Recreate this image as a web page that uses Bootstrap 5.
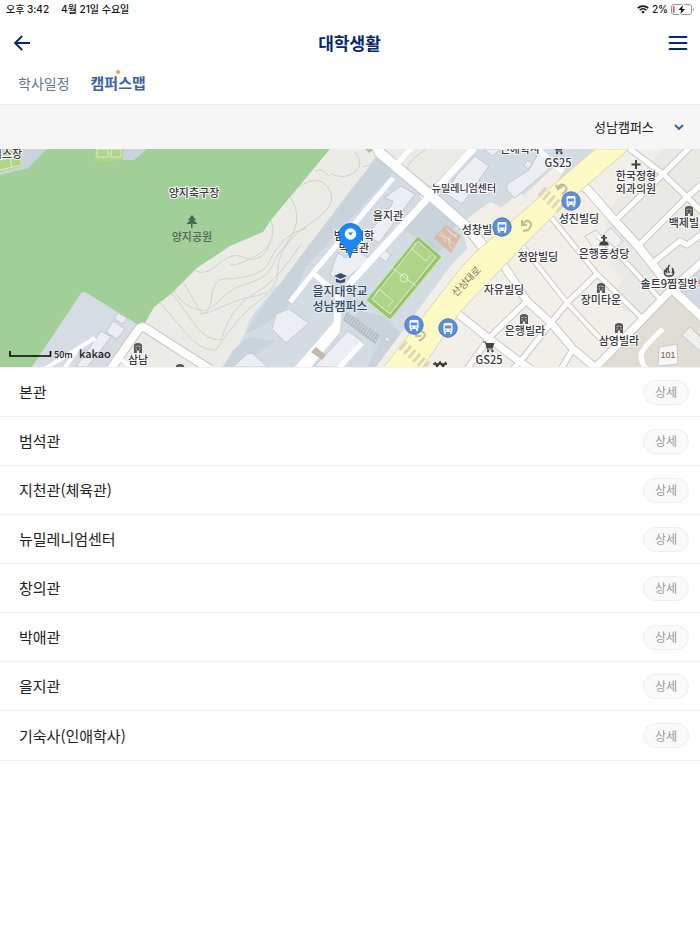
<!DOCTYPE html>
<html lang="ko">
<head>
<meta charset="utf-8">
<meta name="viewport" content="width=device-width, initial-scale=1">
<title>대학생활 - 캠퍼스맵</title>
<link rel="stylesheet" href="https://cdn.jsdelivr.net/npm/bootstrap@5.3.0/dist/css/bootstrap.min.css">
<style>
  :root { --navy: #062a6b; --blue: #3c5fa3; --line: #f1f1f1; }
  body { font-family: Inter, "Noto Sans CJK KR", sans-serif; color: #222; background: #fff; }
  svg { display: block; }
  .status-bar { height: 18px; font-size: 10px; line-height: 18px; font-weight: 500; color: #111; padding: 0 5px 0 6px; }
  .status-left { gap: 12px; }
  .status-right { gap: 3px; }
  .app-bar { height: 50px; padding: 0 12px 0 14px; color: var(--navy); font-family: "Noto Sans CJK KR", sans-serif; }
  .app-bar h1 { font-size: 17px; line-height: 24px; font-weight: 700; }
  .app-bar .btn { color: inherit; line-height: 1; }
  .page-tabs { height: 37px; padding: 4px 18px 0; gap: 21px; border-bottom: 1px solid #ebebeb; font-family: "Noto Sans CJK KR", sans-serif; }
  .page-tabs .nav-link { padding: 0; font-size: 14px; line-height: 22px; color: #5f7391; }
  .page-tabs .nav-link.active { color: var(--blue); font-size: 15px; font-weight: 700; }
  .tab-dot { width: 4px; height: 4px; background: #fb9a4b; top: -2px; }
  .campus-bar { height: 44px; background: #f6f6f6; padding-right: 14px; }
  .campus-bar .form-select {
    width: auto; border: 0; padding: 0 32px 0 0; font: 13px/22px "Noto Sans CJK KR", sans-serif; color: #222; background-color: transparent;
    background-image: url("data:image/svg+xml,%3Csvg xmlns='http://www.w3.org/2000/svg' viewBox='0 0 12 8'%3E%3Cpath d='M2 2l4 4 4-4' fill='none' stroke='%23315a9e' stroke-width='1.8'/%3E%3C/svg%3E");
    background-size: 12px 8px; background-position: right 1px center;
  }
  .campus-map { border-bottom: 1px solid #f3f3f3; font-family: "Noto Sans CJK KR", sans-serif; }
  .place-list { border-bottom: 1px solid var(--line); }
  .place-list .list-group-item { min-height: 49px; padding: 0 11px 0 19px; border-color: var(--line); color: #222; font: 15px/22px "Noto Sans CJK KR", sans-serif; }
  .place-list .btn { width: 46px; height: 25px; padding: 0; font-size: 12px; line-height: 22px; color: #999; background: #fafafa; border: 1px solid #eee; }
  .label { font-size: 11px; font-weight: 500; fill: #36363c; text-anchor: middle; paint-order: stroke; stroke: #fff; stroke-width: 2px; stroke-linejoin: round; }
  .contour { fill: none; stroke: #d0d1cc; }
  .building { fill: #ebeff3; stroke: #c3c9d0; stroke-width: 1; }
</style>
<script src="https://cdn.jsdelivr.net/npm/bootstrap@5.3.0/dist/js/bootstrap.bundle.min.js"></script>
</head>
<body>
<div class="status-bar d-flex justify-content-between">
  <div class="status-left d-flex"><span>오후 3:42</span><span>4월 21일 수요일</span></div>
  <div class="status-right d-flex align-items-center">
    <svg width="12" height="9" viewBox="0 0 12 9" aria-label="Wi-Fi"><path d="M.8 3.200a7.600 7.600 0 0 1 10.400 0M2.700 5.200a4.800 4.800 0 0 1 6.600 0" fill="none" stroke="#111" stroke-width="1.700"/><path d="M4.200 6.800a2.800 2.800 0 0 1 3.600 0L6 8.800z" fill="#111"/></svg>
    <span>2%</span>
    <svg width="24" height="11" viewBox="0 0 24 11" aria-label="배터리"><rect x=".5" y=".5" width="20" height="10" rx="2.500" fill="#fff" stroke="#999"/><path d="M22 3.800a2 2 0 0 1 0 3.400z" fill="#999"/><path d="M12 1L7.500 6h2.700L9.400 10 14 5h-2.800z" fill="#111" stroke="#fff" stroke-width="2" paint-order="stroke"/><path d="M2 2.200h1.500v6.600H2z" fill="#f2453d"/></svg>
  </div>
</div>

<header class="app-bar d-flex align-items-center justify-content-between">
  <button class="btn p-0 border-0" type="button" aria-label="뒤로"><svg width="17" height="16" viewBox="0 0 17 16"><path d="M16 8H1.500M8.200 1L1.200 8l7 7" fill="none" stroke="currentColor" stroke-width="1.900"/></svg></button>
  <h1 class="m-0">대학생활</h1>
  <button class="btn p-0 border-0" type="button" aria-label="메뉴"><svg width="20" height="16" viewBox="0 0 20 16"><path d="M1.500 2h17M1.500 8h17M1.500 14h17" stroke="currentColor" stroke-width="1.800" stroke-linecap="round"/></svg></button>
</header>

<nav class="page-tabs nav align-items-start">
  <a class="nav-link" href="#schedule">학사일정</a>
  <a class="nav-link active position-relative" href="#map" aria-current="page">캠퍼스맵<span class="tab-dot position-absolute start-50 translate-middle-x rounded-circle"></span></a>
</nav>

<main>
  <div class="campus-bar d-flex align-items-center justify-content-end">
    <label class="visually-hidden" for="campus">캠퍼스 선택</label>
    <select class="form-select" id="campus"><option>성남캠퍼스</option></select>
  </div>

  <div class="campus-map" id="map">
  <svg class="w-100 h-auto" viewBox="0 149 700 218" role="img" aria-label="성남캠퍼스 지도">
    <defs>
      <g id="tower"><path d="M-4 5V-2.500Q-4-5 0-5t4 2.500V5H1.200V2.500h-2.400V5z" fill="#555"/><path d="M-2.500-1.500h1.300m2.400 0h1.300M-2.500 1h1.300m2.400 0h1.300M-.5-2h1" stroke="#ddd" stroke-width="1.200"/></g>
      <g id="cart"><path d="M-6-5h2.500l2 7H4" fill="none" stroke="#444" stroke-width="1.200"/><path d="M-3.500-4H5.500L3.800 1h-6z" fill="#444"/><circle cx="-1" cy="4" r="1.200" fill="#444"/><circle cx="3.400" cy="4" r="1.200" fill="#444"/></g>
      <g id="bus"><circle r="9.200" fill="#5b8fdd" stroke="#4b79c4"/><rect x="-4.500" y="-5" width="9" height="9" rx="1.500" fill="#fff"/><path d="M-3.200-2.500h6.400v3h-6.400z" fill="#5b8fdd"/><path d="M-3 4v1.800M3 4v1.800" stroke="#fff" stroke-width="1.800"/><path d="M-3 2.200h1.500m3 0H3" stroke="#5b8fdd"/></g>
      <g id="streets">
        <path stroke-width="8" d="M578 182l10 8 27 31 23 25 34 43 32 30"/>
        <path stroke-width="5" d="M626 146l37 28 24 23 16 16M615 221l48-47 28-28M638 246l49-49 16-14M655 261l25-20 7 4 16-12"/>
        <path stroke-width="4" d="M550 216l47 58 46 45M598 236l22 20 40 43M520 243l48 61 39 42"/>
        <path stroke-width="7" d="M594 369l46-47 32-33 30-27M453 310l34 27 33 25 12 8M500 260l10 15 17 26 25 23 21 25 24 20"/>
        <path stroke-width="5" d="M597 274l-29 28-18 22-30 38-8 8M527 301l-37 36-23 32M573 349l-12 20"/>
        <path stroke-width="10" d="M376 144l4 9 50 42 40 35 16 20"/>
        <path stroke-width="5" d="M413 146l-15 17"/>
        <path stroke-width="7" d="M474 148l-46 50-76 83-14 20-1 23-42 48M337 322l-1 9-31 38"/>
        <path stroke-width="5" d="M393 178l-80 95-23 29M313 273l15 13 11 14M362 343l-24 26M535 146l28 26"/>
        <path stroke-width="8" d="M110 370l28-40q4-5 9-1l64 41"/>
        <path stroke-width="4" d="M95 338l-52 32M77 350l-13 19M117 356l15 12"/>
      </g>
    </defs>
    <path fill="#ebece6" d="M0 149h700v218H0z"/>
    <path fill="#f2efe8" d="M375 367l100-139 80-79h145v218z"/>
    <path fill="#e9eae4" d="M612 205l51-56h37v130l-28 12-29 27-35-15 14-23-22-30z"/>
    <path fill="#e0ddd4" d="M597 369l75-75 28 25v50z"/>
    <path fill="#d3dae3" d="M700 264l-22 23 22 27z"/>
    <path fill="#e99b96" d="M700 279l-4 3 4 3z"/>

    <g class="contour">
      <path d="M315 171q7-4 14 5M299 187q20-14 30 2t-18 34q-33 21-33 47 0 22-22 26c-24 3-44 18-56 18M271 220q7 20-10 33-27 15-31 11M290 197c20 30-10 50-16 65s-15 18-34 24c-24 10-25 31-47 22-19-8-25-28-28-44M355 152q10 12 0 20t-24 2M378 152q-2 13-15 15"/>
      <path d="M195 271q10 4 20-4 14-14 25-11 22 11 31-15M183 283c12 13 19 48 28 19q2-24 13-23 36-1 44-15 12-29 38-36M171 293c20 22 27 47 50 47q10-34 33-46t47-50M160 303c20 20 33 48 56 47q20-30 34-42l28-22M172 340l30 22"/>
    </g>
    <path fill="#a0cf97" d="M0 149h330l-59 71-8 12-33 14-33 22-25 25-18 14-10 18-5 3-54-35h-3L32 367H0zM365 149h9l-5 4z"/>
    <path fill="#cbd4dd" d="M0 149h47l-19 19-28 7zM123 149h24l-13 11h-11z"/>
    <path fill="#b0d488" d="M0 152l20-3 3 17-23 6zM95 149h28v11l-29 3z"/>
    <path d="M0 160l20-4 2 9-22 5M10 158l2 9M97 149h11v8H97zm14 0h10v8h-10z" fill="none" stroke="#dfeec0"/>
    <path fill="#d5dce3" d="M82 292h3l55 34-28 41H32z"/>
    <g class="building"><path d="M118 313l9 5-4 6-9-5zM113 321l12 8-8 10-11-7zM101 331l10 6-24 30H76zM223 367l16-15 14 15z"/></g>

    <path fill="#d3dbe3" d="M376 155l9-6h215l-52 48-52 20-21 21-78 102-19 27H223l20-29 7-19 15-19 70-75z"/>
    <path fill="#c8d3dc" d="M380 153l-23 29-60 79-33 44-18 28 16-6 28-23 16-37 86-93 8-12zM233 350l17-13 25 4-16 12-22 14h-14zM353 298l12 6-14 16 30 18-14 29h14l22-31-19-20-22-4zM430 198l28 22-12 27-9 5-38-26z"/>
    <path fill="#f2efe8" d="M376 367l76-103 47-44 24-24 28-26 20-12-40 70-110 139z"/>
    <path fill="#f2efe8" d="M460 224l30-22 12 5 18-15 6 7-40 38-18 13z"/>
    <path fill="#ebebe5" d="M385 149h84l-38 38-33-25z"/>
    <path class="contour" d="M406 171q3-12 21-22"/>
    <g class="building">
      <path d="M401 186l14 8-36 49-12-8 24-29 2-5-9-3z"/><path d="M338 253l8 5 8-10 16 11-30 25-10-10 5-14z"/><path d="M289 309l20 14-23 20-14-14 4-15zM348 331l14 10-24 26h-24zM252 353l16 14h-35l14-13z"/>
      <path d="M385 250l6 5-5 7-7-5zM421 193l5 4-4 3-4-4zM387 336l4 6-7-2z"/>
      <path d="M475 156l14 10-27 38-16-10 10-18zM507 184l22-14 10-18 16 12-40 34-8-8zM528 160l4 4-4 5-4-4zM484 149h18l-10 7z"/>
      <path fill="#f0f0ed" d="M585 236l11-6 6 6 9-8 12 13-11 11-6-5-8 9zM682 335l8-8 14 14v14z"/>
      <path fill="#f7f6f2" d="M659 347l18-3 1 20-20 2z"/>
    </g>

    <path fill="#aed587" stroke="#d6e8bf" d="M418 236l24 21-52 63-24-20z"/>
    <path fill="none" stroke="#97c56f" stroke-width="3" d="M418 239l21 18-49 60-21-17z"/>
    <g fill="none" stroke="#dfefd0"><path d="M418 241l18 16-46 57-18-15zM391 267l25 19M416 243l-4 6 14 12 5-6M375 295l4-6 14 12-5 6"/><circle cx="404" cy="278" r="4"/></g>
    <path fill="#d8b9a8" d="M446 225l15 11-10 17-17-15z"/><path d="M440 232l15 13M446 228l11 10M452 249q-5-7-2-13M439 235q7 1 6 7M457 235q-7 1-8-5" fill="none" stroke="#f0e2d8"/>

    <g fill="none" stroke="#c8c8c6" stroke-linejoin="round">
      <path stroke-width="7" d="M626 146l37 28 24 23 16 16M615 221l48-47 28-28M638 246l49-49 16-14M655 261l25-20 7 4 16-12M597 274l-29 28-18 22-30 38-8 8M527 301l-37 36-23 32M573 349l-12 20"/>
      <path stroke-width="10" d="M578 182l10 8 27 31 23 25 34 43 32 30"/>
      <path stroke-width="6" d="M550 216l47 58 46 45M598 236l22 20 40 43M520 243l48 61 39 42"/>
      <path stroke-width="9" d="M594 369l46-47 32-33 30-27M453 310l34 27 33 25 12 8M500 260l10 15 17 26 25 23 21 25 24 20"/>
      <path stroke-width="12" d="M376 144l4 9 50 42 40 35 16 20"/>
      <path stroke-width="10" d="M110 370l28-40q4-5 9-1l64 41"/>
    </g>
    <g fill="none" stroke="#fff" stroke-linejoin="round"><use href="#streets"/></g>
    <path d="M663 329q-18 16-22 25 0 10 6 15" fill="none" stroke="#fff" stroke-width="5"/>
    <path fill="#c4b9ad" d="M316 347l10 8-4 5-11-8z"/>
    <path fill="#b5bdc4" d="M347 312l33 24-5 8-32-24z"/><path d="M347 317l30 22" stroke="#d3d9de" stroke-width="7" stroke-dasharray="1 2"/>

    <path fill="#fefac4" stroke="#d9d6b8" d="M383 368l77-99 16-17 119-103h34l-42 36-35 32-29 29-63 66-38 56z"/>
    <path d="M541 191l22 19M402 345l25 22" stroke="#ddd8b3" stroke-width="11" stroke-dasharray="3 3"/>
    <g fill="none" stroke="#c1bca0" stroke-width="2"><path d="M523 231l5-1q5-5 2-8-4-3-7 2m-1-4v5h5"/><path d="M562 194q8-5 2-9-4-2-6 3m-2-3l2 4 5-3M419 341q8-4 5-8-4-4-7 1m-1-3v5h5"/></g>

    <use href="#bus" x="571" y="201"/><use href="#bus" x="414" y="325"/><use href="#bus" x="448" y="328"/>
    <use href="#tower" x="138" y="348"/><use href="#tower" x="180" y="369"/><use href="#tower" x="689" y="211"/><use href="#tower" x="601" y="288"/><use href="#tower" x="524" y="319"/><use href="#tower" x="619" y="328"/>
    <use href="#cart" x="558" y="149"/><use href="#cart" x="489" y="347"/>
    <path d="M636 160v9M631.500 164.500h9" stroke="#444" stroke-width="2"/>
    <path fill="#444" d="M603 235h2v2h2v1.500h-2v2.500l3 1.500 1 3H599l1-3 3-1.500v-2.500h-2V237h2z"/>
    <path d="M665 270q-2 5 2 6h4q4-1 2-6M667 273q-2-3 0-5M669.500 273q-3-4 0-8M672 273q2-3 0-5" fill="none" stroke="#444" stroke-width="1.500"/>
    <path fill="#4a6650" d="M192 215l4 5h-2l3.500 4h-5v4h-1.500v-4h-4.500l3.500-4h-2z"/>
    <path fill="#34506f" d="M340.500 273l6.500 3-6.500 3-6.500-3zM336 278.500l4.500 2 4.500-2v3.500q-4.500 2-9 0z"/>
    <path d="M435 362l2 5 3-5 3 5 3-5M433 364h14" fill="none" stroke="#333" stroke-width="1.500"/>

    <g class="label">
      <text x="7" y="158">니스장</text>
      <text x="194" y="197">양지축구장</text>
      <text x="192" y="241" fill="#53655a" stroke="none">양지공원</text>
      <text x="388" y="220">을지관</text>
      <text x="464" y="192" font-size="10">뉴밀레니엄센터</text>
      <text x="520" y="153">인애학사</text>
      <text x="558" y="167">GS25</text>
      <text x="636" y="180">한국정형</text><text x="636" y="193">외과의원</text>
      <text x="579" y="223">성진빌딩</text><text x="482" y="234">성창빌딩</text>
      <text x="538" y="261">정암빌딩</text><text x="604" y="258">은행동성당</text>
      <text x="504" y="294">자유빌딩</text><text x="601" y="304">장미타운</text>
      <text x="689" y="227">백제빌딩</text><text x="669" y="288">솔트9찜질방</text>
      <text x="525" y="335">은행빌라</text><text x="619" y="345">삼영빌라</text>
      <text x="489" y="364">GS25</text><text x="138" y="364">삼남</text>
      <text x="354" y="240">범석의학</text><text x="354" y="252">박물관</text>
    </g>
    <use href="#bus" x="502" y="227"/>
    <g font-size="12" font-weight="500" fill="#2c4766" text-anchor="middle" paint-order="stroke" stroke="#e6ebf0" stroke-width="2"><text x="340" y="296">을지대학교</text><text x="340" y="311">성남캠퍼스</text></g>
    <text x="668" y="358" font-size="9" font-family="Liberation Sans, sans-serif" text-anchor="middle" fill="#6b5b4d">101</text>
    <text transform="translate(456 297) rotate(-46)" font-size="10" fill="#77745f">산성대로</text>
    <path fill="#1b86f5" stroke="#1877df" d="M350 258l-3-9q-8-6-8-14a11.500 11.500 0 0 1 23 0q0 8-9 14z"/>
    <circle cx="350.500" cy="234" r="5.800" fill="#fff"/><path fill="#1b86f5" d="M348 232.500h5l-2.500 3z"/>
    <path d="M10 351v5h40.500v-5" fill="none" stroke="#000" stroke-width="1.600"/>
    <g fill="#222"><text x="54" y="358" font-size="9" font-weight="500">50m</text><text x="79" y="358" font-size="11" font-weight="500">kakao</text></g>
  </svg>
  </div>

  <ul class="place-list list-group list-group-flush">
    <li class="list-group-item d-flex align-items-center justify-content-between"><span>본관</span><button class="btn rounded-pill" type="button">상세</button></li>
    <li class="list-group-item d-flex align-items-center justify-content-between"><span>범석관</span><button class="btn rounded-pill" type="button">상세</button></li>
    <li class="list-group-item d-flex align-items-center justify-content-between"><span>지천관(체육관)</span><button class="btn rounded-pill" type="button">상세</button></li>
    <li class="list-group-item d-flex align-items-center justify-content-between"><span>뉴밀레니엄센터</span><button class="btn rounded-pill" type="button">상세</button></li>
    <li class="list-group-item d-flex align-items-center justify-content-between"><span>창의관</span><button class="btn rounded-pill" type="button">상세</button></li>
    <li class="list-group-item d-flex align-items-center justify-content-between"><span>박애관</span><button class="btn rounded-pill" type="button">상세</button></li>
    <li class="list-group-item d-flex align-items-center justify-content-between"><span>을지관</span><button class="btn rounded-pill" type="button">상세</button></li>
    <li class="list-group-item d-flex align-items-center justify-content-between"><span>기숙사(인애학사)</span><button class="btn rounded-pill" type="button">상세</button></li>
  </ul>
</main>
</body>
</html>
